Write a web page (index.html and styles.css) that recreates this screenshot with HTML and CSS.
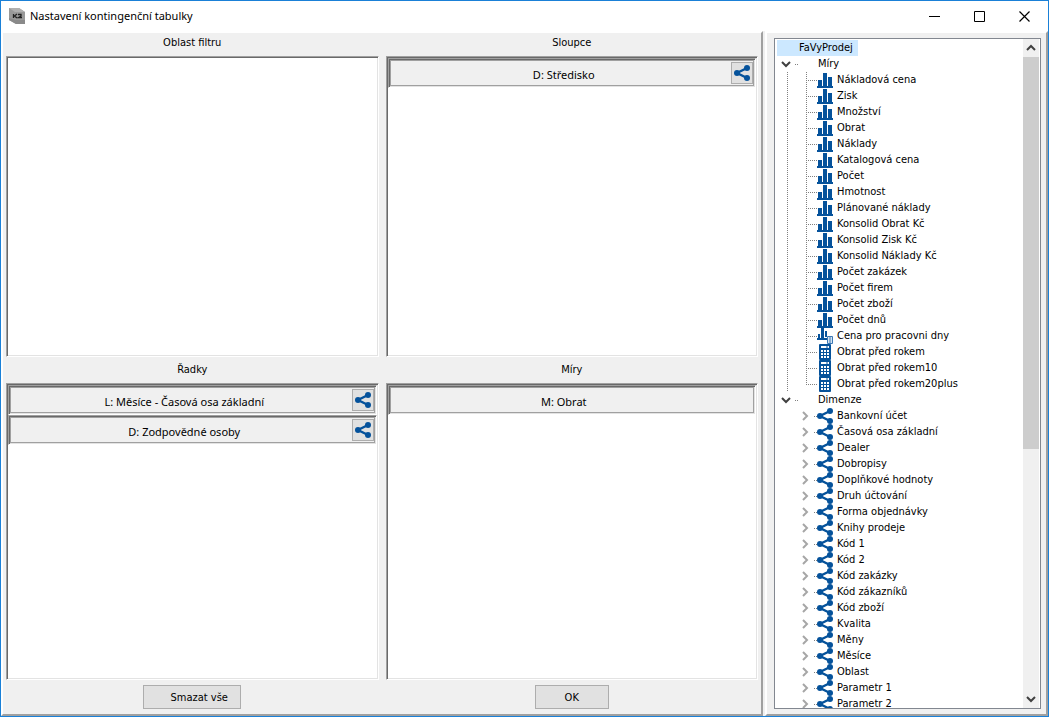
FILE: index.html
```html
<!DOCTYPE html>
<html lang="cs">
<head>
<meta charset="utf-8">
<title>Nastavení kontingenční tabulky</title>
<link rel="stylesheet" href="styles.css">
</head>
<body>
<svg class="defs" aria-hidden="true">
  <symbol id="share" viewBox="0 0 16 16"><path d="M13 3 3 8l10 5" fill="none" stroke="#05529b" stroke-width="2.400"/><g fill="#05529b"><circle cx="3" cy="8" r="3"/><circle cx="13" cy="3" r="3"/><circle cx="13" cy="13" r="3"/></g></symbol>
  <symbol id="bars" viewBox="0 0 16 16"><path d="M1 8h4v6H1zM6 1h4v13H6zM11 5h4v9h-4zM0 14h16v2H0z" fill="#05529b"/></symbol>
  <symbol id="barscalc" viewBox="0 0 16 16"><path d="M1 6h2v5H1zM4 0h3v11H4zM8 3h2v6H8zM0 10h10v2H0z" fill="#05529b"/><path d="M10.500 8.500h5v7h-5z" fill="#d5e4f2" stroke="#3c78b4"/><path d="M12 10h2M12 12h2M12 14h2" stroke="#3c78b4"/></symbol>
  <symbol id="calc" viewBox="0 0 16 16"><rect x="2" y="0" width="12" height="16" rx="1" fill="#05529b"/><path d="M4 2h8v2H4zM4 6h2v2H4zM7 6h2v2H7zM10 6h2v2h-2zM4 9h2v2H4zM7 9h2v2H7zM10 9h2v2h-2zM4 12h2v2H4zM7 12h2v2H7zM10 12h2v2h-2z" fill="#fff"/><path d="M9 3h2" stroke="#05529b"/></symbol>
  <symbol id="down" viewBox="0 0 12 12"><path d="M2 4l4 4 4-4" fill="none" stroke="#404040" stroke-width="2"/></symbol>
  <symbol id="right" viewBox="0 0 12 12"><path d="M4 2l4 4-4 4" fill="none" stroke="#a6a6a6" stroke-width="2"/></symbol>
</svg>
<div class="window">
  <header class="titlebar">
    <svg class="logo" viewBox="0 0 16 16" aria-hidden="true"><path d="M0 0h10l6 4v12H7l-7-4z" fill="#999"/><path d="M0 0h10l6 4H6z" fill="#b0b0b0"/><path d="M0 10l7 2h9v4H7l-7-4z" fill="#8a8a8a"/><path d="M4.500 6v4M8 6 5.500 8 8 10M9 6.500h3V8L9.500 9.500H13" fill="none" stroke="#222" stroke-width="1.300"/></svg>
    <h1>Nastavení kontingenční tabulky</h1>
    <button aria-label="Minimalizovat"><svg viewBox="0 0 11 11"><path d="M0 5.500h11" stroke="#000"/></svg></button>
    <button aria-label="Maximalizovat"><svg viewBox="0 0 11 11"><path d="M.5.5h10v10H.5z" fill="none" stroke="#000"/></svg></button>
    <button aria-label="Zavřít"><svg viewBox="0 0 11 11"><path d="M.5.5l10 10M10.500.5l-10 10" stroke="#000" stroke-width="1.200"/></svg></button>
  </header>
  <main class="body">
    <div class="pane areas">
      <section><h2>Oblast filtru</h2><div class="box"></div></section>
      <section><h2>Sloupce</h2><div class="box">
        <div class="chip"><span>D: Středisko</span><button aria-label="Dimenze"><svg><use href="#share"/></svg></button></div>
      </div></section>
      <section class="lower"><h2>Řadky</h2><div class="box">
        <div class="chip"><span>L: Měsíce - Časová osa základní</span><button aria-label="Dimenze"><svg><use href="#share"/></svg></button></div>
        <div class="chip"><span>D: Zodpovědné osoby</span><button aria-label="Dimenze"><svg><use href="#share"/></svg></button></div>
      </div></section>
      <section class="lower"><h2>Míry</h2><div class="box">
        <div class="chip"><span>M: Obrat</span></div>
      </div></section>
      <div class="action"><button class="clear">Smazat vše</button></div>
      <div class="action"><button>OK</button></div>
    </div>
    <div class="pane fields">
      <div class="treebox">
        <div class="tree">
          <div class="root">FaVyProdej</div>
          <div class="group"><button aria-label="Sbalit"><svg><use href="#down"/></svg></button><i class="dots"></i><span>Míry</span></div>
          <ul class="measures">
            <li><i></i><svg><use href="#bars"/></svg>Nákladová cena</li>
            <li><i></i><svg><use href="#bars"/></svg>Zisk</li>
            <li><i></i><svg><use href="#bars"/></svg>Množství</li>
            <li><i></i><svg><use href="#bars"/></svg>Obrat</li>
            <li><i></i><svg><use href="#bars"/></svg>Náklady</li>
            <li><i></i><svg><use href="#bars"/></svg>Katalogová cena</li>
            <li><i></i><svg><use href="#bars"/></svg>Počet</li>
            <li><i></i><svg><use href="#bars"/></svg>Hmotnost</li>
            <li><i></i><svg><use href="#bars"/></svg>Plánované náklady</li>
            <li><i></i><svg><use href="#bars"/></svg>Konsolid Obrat Kč</li>
            <li><i></i><svg><use href="#bars"/></svg>Konsolid Zisk Kč</li>
            <li><i></i><svg><use href="#bars"/></svg>Konsolid Náklady Kč</li>
            <li><i></i><svg><use href="#bars"/></svg>Počet zakázek</li>
            <li><i></i><svg><use href="#bars"/></svg>Počet firem</li>
            <li><i></i><svg><use href="#bars"/></svg>Počet zboží</li>
            <li><i></i><svg><use href="#bars"/></svg>Počet dnů</li>
            <li><i></i><svg><use href="#barscalc"/></svg>Cena pro pracovni dny</li>
            <li><i></i><svg><use href="#calc"/></svg>Obrat před rokem</li>
            <li><i></i><svg><use href="#calc"/></svg>Obrat před rokem10</li>
            <li><i></i><svg><use href="#calc"/></svg>Obrat před rokem20plus</li>
          </ul>
          <div class="group"><button aria-label="Sbalit"><svg><use href="#down"/></svg></button><i class="dots"></i><span>Dimenze</span></div>
          <ul class="dimensions">
            <li><button aria-label="Rozbalit"><svg><use href="#right"/></svg></button><i class="dots"></i><svg><use href="#share"/></svg>Bankovní účet</li>
            <li><button aria-label="Rozbalit"><svg><use href="#right"/></svg></button><i class="dots"></i><svg><use href="#share"/></svg>Časová osa základní</li>
            <li><button aria-label="Rozbalit"><svg><use href="#right"/></svg></button><i class="dots"></i><svg><use href="#share"/></svg>Dealer</li>
            <li><button aria-label="Rozbalit"><svg><use href="#right"/></svg></button><i class="dots"></i><svg><use href="#share"/></svg>Dobropisy</li>
            <li><button aria-label="Rozbalit"><svg><use href="#right"/></svg></button><i class="dots"></i><svg><use href="#share"/></svg>Doplňkové hodnoty</li>
            <li><button aria-label="Rozbalit"><svg><use href="#right"/></svg></button><i class="dots"></i><svg><use href="#share"/></svg>Druh účtování</li>
            <li><button aria-label="Rozbalit"><svg><use href="#right"/></svg></button><i class="dots"></i><svg><use href="#share"/></svg>Forma objednávky</li>
            <li><button aria-label="Rozbalit"><svg><use href="#right"/></svg></button><i class="dots"></i><svg><use href="#share"/></svg>Knihy prodeje</li>
            <li><button aria-label="Rozbalit"><svg><use href="#right"/></svg></button><i class="dots"></i><svg><use href="#share"/></svg>Kód 1</li>
            <li><button aria-label="Rozbalit"><svg><use href="#right"/></svg></button><i class="dots"></i><svg><use href="#share"/></svg>Kód 2</li>
            <li><button aria-label="Rozbalit"><svg><use href="#right"/></svg></button><i class="dots"></i><svg><use href="#share"/></svg>Kód zakázky</li>
            <li><button aria-label="Rozbalit"><svg><use href="#right"/></svg></button><i class="dots"></i><svg><use href="#share"/></svg>Kód zákazníků</li>
            <li><button aria-label="Rozbalit"><svg><use href="#right"/></svg></button><i class="dots"></i><svg><use href="#share"/></svg>Kód zboží</li>
            <li><button aria-label="Rozbalit"><svg><use href="#right"/></svg></button><i class="dots"></i><svg><use href="#share"/></svg>Kvalita</li>
            <li><button aria-label="Rozbalit"><svg><use href="#right"/></svg></button><i class="dots"></i><svg><use href="#share"/></svg>Měny</li>
            <li><button aria-label="Rozbalit"><svg><use href="#right"/></svg></button><i class="dots"></i><svg><use href="#share"/></svg>Měsíce</li>
            <li><button aria-label="Rozbalit"><svg><use href="#right"/></svg></button><i class="dots"></i><svg><use href="#share"/></svg>Oblast</li>
            <li><button aria-label="Rozbalit"><svg><use href="#right"/></svg></button><i class="dots"></i><svg><use href="#share"/></svg>Parametr 1</li>
            <li><button aria-label="Rozbalit"><svg><use href="#right"/></svg></button><i class="dots"></i><svg><use href="#share"/></svg>Parametr 2</li>
          </ul>
        </div>
        <div class="scrollbar">
          <button aria-label="Nahoru"><svg class="up"><use href="#down"/></svg></button>
          <div class="track"><div class="thumb"></div></div>
          <button aria-label="Dolů"><svg><use href="#down"/></svg></button>
        </div>
      </div>
    </div>
  </main>
</div>
</body>
</html>
```
FILE: styles.css
```css
* { box-sizing: border-box; }
body { margin: 0; color: #000; font: 11px/16px "DejaVu Sans Condensed", "DejaVu Sans", sans-serif; }
button { font: inherit; color: inherit; margin: 0; padding: 0; border: 0; background: none; }
svg { display: block; flex: none; }
h1, h2, ul { margin: 0; padding: 0; font: inherit; list-style: none; }
.defs { position: absolute; width: 0; height: 0; }

.window { height: 100vh; display: flex; flex-direction: column; border: 1px solid #1a80d7; background: #fff; }
.titlebar { display: flex; align-items: center; height: 30px; flex: none; padding: 0 1px 0 8px; }
.titlebar .logo { width: 16px; height: 16px; }
.titlebar h1 { flex: 1; padding-left: 5px; font: 11px/16px "Noto Sans", sans-serif; }
.titlebar button { width: 45px; height: 28px; display: grid; place-items: center; }
.titlebar button svg { width: 11px; height: 11px; }

.body { flex: 1; min-height: 0; display: flex; gap: 2px; background: #f0f0f0; }
.pane { border: solid; border-width: 2px; border-color: #fff #a0a0a0 #a0a0a0 #fff; }
.areas { flex: 1; min-width: 0; display: grid; grid-template: 1fr 1fr 34px / 1fr 1fr; column-gap: 7px; padding: 0 3px; }
.areas section { display: flex; flex-direction: column; min-height: 0; }
.areas h2 { flex: none; height: 23px; padding-top: 2px; text-align: center; }
.areas .lower h2 { height: 26px; padding-top: 5px; }
.box { flex: 1; background: #fff; border: 1px solid; border-color: #a0a0a0 #fff #fff #a0a0a0; box-shadow: inset 1px 1px #696969, inset -1px -1px #e3e3e3; padding: 1px; }
.chip { display: grid; align-items: center; height: 30px; padding: 2px; background: #f0f0f0; border: 1px solid; border-color: #a0a0a0 #fff #fff #a0a0a0; box-shadow: inset 1px 1px #696969, inset -1px -1px #e3e3e3, inset 2px 2px #a0a0a0, inset -2px -2px #a0a0a0; }
.chip > * { grid-area: 1 / 1; }
.chip span { padding: 4px 16px 0 0; text-align: center; font-family: "Noto Sans", sans-serif; }
.chip button { justify-self: end; width: 22px; height: 22px; display: grid; place-items: center; background: #e1e1e1; border: 1px solid #adadad; }
.chip svg { width: 16px; height: 16px; }
.action { display: flex; justify-content: center; align-items: center; }
.action button { height: 24px; width: 74px; padding-top: 2px; background: #e1e1e1; border: 1px solid #adadad; }
.action .clear { width: 98px; padding-left: 14px; }

.fields { flex: none; width: 283px; display: flex; padding: 5px 5px 5px 7px; }
.treebox { flex: 1; min-height: 0; display: flex; background: #fff; border: 1px solid #828790; }
.tree { flex: 1; overflow: hidden; padding-top: 1px; white-space: nowrap; }
.root { width: max-content; margin-left: 2px; padding: 0 5px 0 22px; background: #cce8ff; }
.group, .tree li { display: flex; align-items: center; height: 16px; }
.group { padding-left: 5px; }
.group span { padding-left: 20px; }
.tree button, .tree button svg { width: 12px; height: 12px; }
.dots { width: 3px; height: 1px; margin-left: 3px; background: repeating-linear-gradient(90deg, #808080 0 1px, transparent 1px 2px); }
.measures { margin-left: 12px; padding-left: 19px; background: repeating-linear-gradient(#808080 0 1px, transparent 1px 2px) 0 0 / 1px 100% no-repeat; }
.measures i { width: 11px; height: 16px; background: repeating-linear-gradient(#808080 0 1px, transparent 1px 2px) 0 0 / 1px 100% no-repeat, repeating-linear-gradient(90deg, #808080 0 1px, transparent 1px 2px) 0 8px / 100% 1px no-repeat; }
.measures li:last-child i { background-size: 1px 8px, 100% 1px; }
.dimensions { margin-left: 24px; }
.tree li > svg { width: 16px; height: 16px; margin-right: 4px; }
.scrollbar { width: 16px; margin-right: 1px; display: flex; flex-direction: column; background: #f0f0f0; }
.scrollbar button { height: 18px; display: grid; place-items: center; }
.scrollbar svg { width: 12px; height: 12px; }
.scrollbar .up { transform: rotate(180deg); }
.track { flex: 1; }
.thumb { height: 62%; background: #cdcdcd; }
```
